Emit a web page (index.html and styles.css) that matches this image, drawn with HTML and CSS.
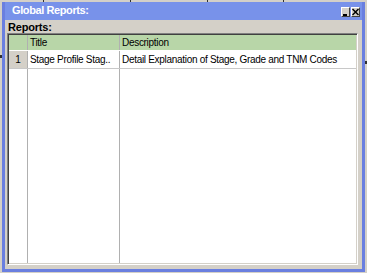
FILE: index.html
```html
<!DOCTYPE html>
<html>
<head>
<meta charset="utf-8">
<link rel="stylesheet" href="styles.css">
</head>
<body>
<div class="desktop">
  <div class="window">
    <div class="titlebar">
      <span class="title">Global Reports:</span>
      <div class="btns">
        <span class="btn"><svg width="7" height="8" viewBox="0 0 7 8"><rect x="1" y="6" width="4" height="2" fill="#000"/></svg></span>
        <span class="btn"><svg width="7" height="8" viewBox="0 0 7 8"><path d="M0.5 1L6.5 7M6.5 1L0.5 7" stroke="#000" stroke-width="1.5"/></svg></span>
      </div>
    </div>
    <div class="body">
      <div class="label">Reports:</div>
      <div class="grid">
        <div class="row head">
          <div class="c num"></div>
          <div class="c ttl">Title</div>
          <div class="c desc">Description</div>
        </div>
        <div class="row data">
          <div class="c num">1</div>
          <div class="c ttl">Stage Profile Stag..</div>
          <div class="c desc">Detail Explanation of Stage, Grade and TNM Codes</div>
        </div>
        <div class="row filler">
          <div class="c num"></div>
          <div class="c ttl"></div>
          <div class="c desc"></div>
        </div>
      </div>
    </div>
  </div>
</div>
</body>
</html>
```
FILE: styles.css
```css
html, body { margin: 0; padding: 0; }
body {
  width: 367px; height: 273px; overflow: hidden;
  background-color: #d4d0c8;
  background-image:
    linear-gradient(#303030, #303030),
    linear-gradient(#303030, #303030),
    linear-gradient(#303030, #303030),
    linear-gradient(#303030, #303030),
    linear-gradient(#303030, #303030),
    linear-gradient(#303030, #303030);
  background-repeat: no-repeat;
  background-size: 1px 2px, 1px 2px, 1px 2px, 1px 2px, 2px 3px, 2px 3px;
  background-position: 43px 0, 130px 0, 207px 0, 283px 0, 0 55px, 365px 61px;
  font-family: "Liberation Sans", Arial, sans-serif;
}
.desktop {
  padding: 2px 2px 1px 2px;
  height: 273px; box-sizing: border-box;
}
.window {
  height: 100%; box-sizing: border-box;
  border: 3px solid #6a7fe0;
  border-top: 0;
  background: #d4d0c8;
  display: flex; flex-direction: column;
}
.titlebar {
  height: 18px; flex: none;
  background: #7892ea;
  display: flex; align-items: center; justify-content: space-between;
  padding: 0 2px 0 7px;
}
.title { color: #fff; font-weight: bold; font-size: 11px; letter-spacing: -0.4px; margin-top: -3px; }
.btns { display: flex; gap: 1px; margin-top: 1px; }
.btn {
  width: 7px; height: 8px; background: #d4d0c8;
  border: 1px solid; border-color: #fff #404040 #404040 #fff;
  display: flex; align-items: center; justify-content: center;
}
.body { flex: 1; display: flex; flex-direction: column; padding: 0 4px 4px 2px; }
.label { font-weight: bold; font-size: 11px; letter-spacing: -0.2px; padding: 1px 0 0 1px; line-height: 12px; }
.grid {
  flex: 1; display: flex; flex-direction: column;
  border: 1px solid; border-color: #808080 #fff #fff #808080;
  box-shadow: inset 1px 1px 0 #404040, inset -1px -1px 0 #d4d0c8;
  background: #fff; padding: 1px;
}
.row { display: flex; font-size: 10px; letter-spacing: -0.3px; white-space: nowrap; }
.c { border-right: 1px solid #b0b0b0; padding-left: 2px; box-sizing: border-box; overflow: hidden; }
.num { width: 19px; text-align: center; padding-left: 0; }
.ttl { width: 92px; }
.desc { flex: 1; border-right: 0; }
.head { height: 15px; background: #b8d6a8; border-bottom: 1px solid #fff; }
.head .c { height: 15px; line-height: 15px; }
.data { height: 17px; border-bottom: 1px solid #c8c8c8; }
.data .c { line-height: 17px; }
.data .num { background: #d4d0c8; }
.filler { flex: 1; }
```
